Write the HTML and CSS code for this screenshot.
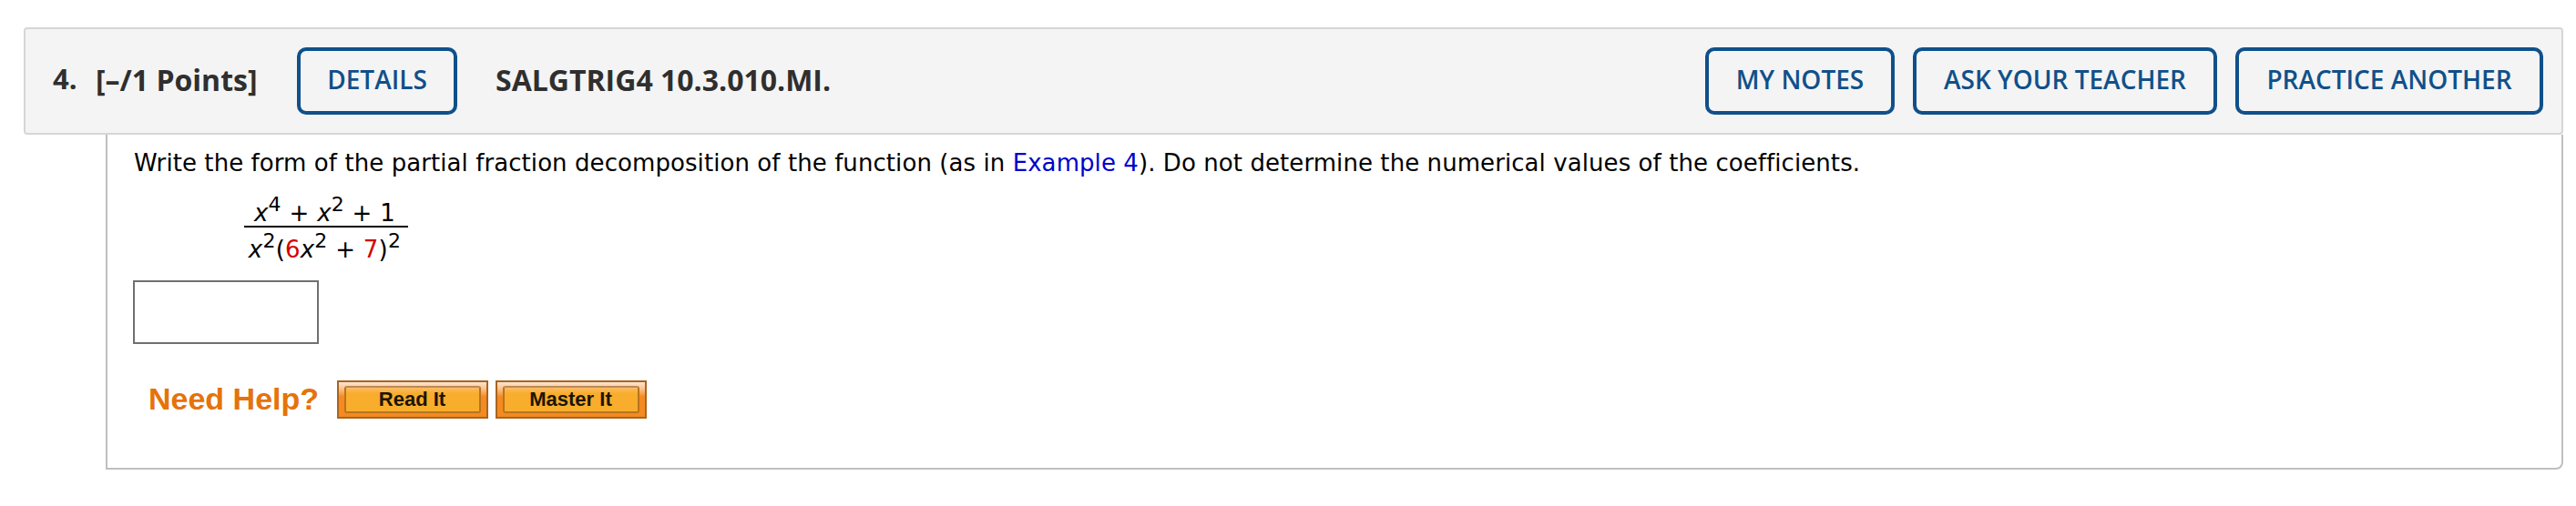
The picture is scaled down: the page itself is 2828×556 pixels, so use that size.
FILE: index.html
```html
<!DOCTYPE html>
<html lang="en">
<head>
    <meta charset="utf-8">
    <title>Question 4</title>
    <link rel="stylesheet" href="styles.css">
</head>
<body>
    <div class="question">
        <div class="question-header">
            <span class="number">4.</span>
            <span class="points">[–/1 Points]</span>
            <button type="button" class="btn btn-details">DETAILS</button>
            <span class="question-name">SALGTRIG4 10.3.010.MI.</span>
            <div class="header-actions">
                <button type="button" class="btn btn-notes">MY NOTES</button>
                <button type="button" class="btn btn-ask">ASK YOUR TEACHER</button>
                <button type="button" class="btn btn-practice">PRACTICE ANOTHER</button>
            </div>
        </div>
        <div class="question-body">
            <p class="prompt">Write the form of the partial fraction decomposition of the function (as in <a class="example" href="#">Example 4</a>). Do not determine the numerical values of the coefficients.</p>
            <div class="fraction">
                <div class="numerator"><i>x</i><sup>4</sup> + <i>x</i><sup>2</sup> + 1</div>
                <div class="denominator"><i>x</i><sup>2</sup>(<span class="value">6</span><i>x</i><sup>2</sup> + <span class="value">7</span>)<sup>2</sup></div>
            </div>
            <input type="text" class="answer">
            <div class="help">
                <span class="help-label">Need Help?</span>
                <button type="button" class="help-btn"><span>Read It</span></button>
                <button type="button" class="help-btn"><span>Master It</span></button>
            </div>
        </div>
    </div>
</body>
</html>
```

FILE: styles.css
```css
* {
    box-sizing: border-box;
}
body {
    margin: 0;
    background: #fff;
    font-family: "DejaVu Sans", Verdana, sans-serif;
}
.question {
    padding: 30px 14px 0 26px;
}
.question-header {
    display: flex;
    align-items: center;
    height: 118px;
    padding: 0 20px 0 30px;
    background: #f4f4f4;
    border: 2px solid #d6d6d6;
    border-radius: 4px;
    color: #2f2f2f;
    font-family: "Open Sans", sans-serif;
    font-weight: 700;
    font-size: 32px;
    white-space: nowrap;
}
.number {
    width: 47px;
    font-size: 31px;
    padding-bottom: 6px;
}
.points {
    width: 221px;
    padding-bottom: 3px;
}
.question-name {
    margin-left: 42px;
    padding-bottom: 3px;
}
.header-actions {
    display: flex;
    gap: 20px;
    margin-left: auto;
}
.btn {
    height: 74px;
    padding: 0 0 4px;
    background: none;
    border: 4px solid #10508a;
    border-radius: 10px;
    color: #10508a;
    font-family: "Open Sans", sans-serif;
    font-weight: 600;
    font-size: 28px;
    white-space: nowrap;
}
.btn-details {
    width: 176px;
}
.btn-notes {
    width: 208px;
}
.btn-ask {
    width: 334px;
}
.btn-practice {
    width: 338px;
}
.question-body {
    height: 368px;
    margin-left: 90px;
    padding: 14px 28px 0;
    border: 2px solid #bfbfbf;
    border-top: none;
    border-bottom-right-radius: 8px;
}
.prompt {
    margin: 0;
    padding-left: 1px;
    font-size: 26px;
    line-height: 34px;
    letter-spacing: 0.075px;
    white-space: nowrap;
}
.example {
    color: #0000cc;
    text-decoration: none;
}
.fraction {
    width: 180px;
    margin: 14px 0 0 122px;
    font-size: 26px;
    line-height: 38px;
    letter-spacing: 0.2px;
    word-spacing: 0.2px;
    text-align: center;
    white-space: nowrap;
}
.fraction sup {
    font-size: 22px;
    line-height: 0;
    vertical-align: 11px;
}
.numerator {
    height: 40px;
    padding: 5px 3px 0 0;
    border-bottom: 2px solid #000;
}
.denominator {
    height: 38px;
    padding: 5px 3px 0 0;
}
.value {
    color: #d40000;
}
.answer {
    display: block;
    width: 204px;
    height: 70px;
    margin-top: 20px;
    border: 2px solid #707070;
}
.help {
    display: flex;
    align-items: center;
    margin: 40px 0 0 17px;
    font-family: "Liberation Sans", Arial, sans-serif;
    font-weight: 700;
}
.help-label {
    width: 207px;
    padding-bottom: 2px;
    color: #e5730a;
    font-size: 34px;
    line-height: 40px;
}
.help-btn {
    width: 166px;
    height: 42px;
    margin-right: 8px;
    padding: 4px 6px 5px;
    border: 2px solid #a9641f;
    background: linear-gradient(#fde6d0, #fbc08a 20%, #f58a20 42%, #f48a20);
    font-family: inherit;
    font-weight: 700;
    font-size: 22px;
    color: #1c1503;
}
.help-btn span {
    display: block;
    height: 30px;
    padding-right: 1px;
    border: 2px solid #b8741f;
    border-top-color: #bc8a58;
    border-radius: 3px;
    background: linear-gradient(#fbbc66, #f8ad2c 25%);
    line-height: 26px;
}
```
